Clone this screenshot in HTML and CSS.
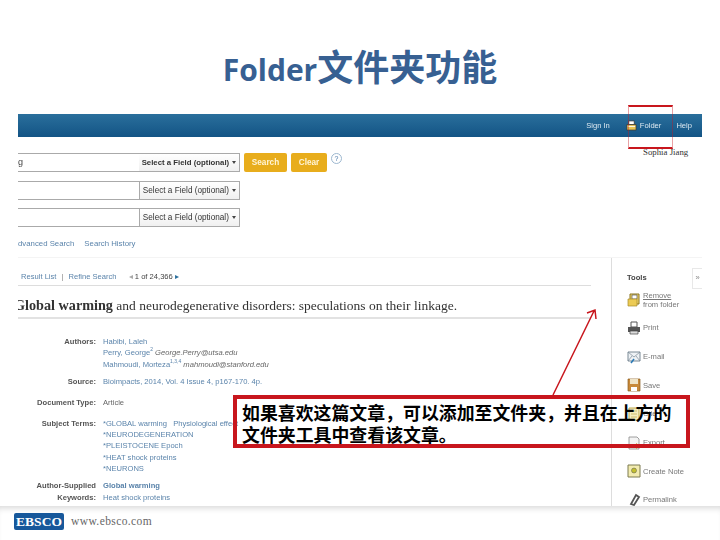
FILE: index.html
```html
<!DOCTYPE html>
<html lang="zh-CN">
<head>
<meta charset="utf-8">
<title>Folder文件夹功能</title>
<link rel="stylesheet" href="styles.css">
</head>
<body>
<div class="slide">
  <h1 class="title">Folder<span class="title-cjk">文件夹功能</span></h1>
  <div class="shot">
    <div class="bar">
      <span>Sign In</span>
      <span class="bar-folder">
        <svg class="bar-icon" viewBox="0 0 12 12"><path d="M3 1h6v4H3z" fill="#fff" stroke="#333" stroke-width=".8"/><path d="M1 5h10v6H1z" fill="#e8c452" stroke="#333" stroke-width=".8"/><path d="M2 7h8" stroke="#fff"/></svg>
        Folder
      </span>
      <span class="bar-help">Help</span>
    </div>
    <div class="search">
      <div class="search-row">
        <div class="field"><span class="field-text">g</span><span class="select select-first">Select a Field (optional) <i class="caret"></i></span></div>
        <span class="btn btn-search">Search</span>
        <span class="btn btn-clear">Clear</span>
        <span class="help">?</span>
      </div>
      <div class="search-row">
        <div class="field"><span class="field-text"></span><span class="select">Select a Field (optional) <i class="caret"></i></span></div>
      </div>
      <div class="search-row">
        <div class="field"><span class="field-text"></span><span class="select">Select a Field (optional) <i class="caret"></i></span></div>
      </div>
      <div class="search-links"><span class="clip-a">dvanced Search</span><span>Search History</span></div>
    </div>
    <div class="main">
      <div class="article">
        <div class="nav">
          <span class="link">Result List</span><span class="sep">|</span><span class="link">Refine Search</span>
          <span class="pager">◂ <b>1 of 24,366</b> <i class="next">▸</i></span>
        </div>
        <h2 class="doc-title"><b>Global warming</b> and neurodegenerative disorders: speculations on their linkage.</h2>
        <div class="meta">
          <div class="row"><div class="label">Authors:</div><div class="value">Habibi, Laleh<br>Perry, George<sup>2</sup> <i class="mail">George.Perry@utsa.edu</i><br>Mahmoudi, Morteza<sup>1,3,4</sup> <i class="mail">mahmoudi@stanford.edu</i></div></div>
          <div class="row"><div class="label">Source:</div><div class="value">Bioimpacts, 2014, Vol. 4 Issue 4, p167-170. 4p.</div></div>
          <div class="row"><div class="label">Document Type:</div><div class="value plain">Article</div></div>
          <div class="row"><div class="label">Subject Terms:</div><div class="value">*GLOBAL warming &nbsp; Physiological effect<br>*NEURODEGENERATION<br>*PLEISTOCENE Epoch<br>*HEAT shock proteins<br>*NEURONS</div></div>
          <div class="row"><div class="label">Author-Supplied<br>Keywords:</div><div class="value"><b>Global warming</b><br>Heat shock proteins<br>Neurodegeneration</div></div>
        </div>
      </div>
      <aside class="tools">
        <div class="tools-head">Tools</div>
        <div class="tool tool-remove">
          <svg class="tool-icon" viewBox="0 0 14 14"><path d="M3 1h9v10H3z" fill="#f2d873" stroke="#8a7420"/><path d="M5 2h5v4H5z" fill="#fff" stroke="#555" stroke-width=".7"/><path d="M1 6h9v7H1z" fill="#eccb55" stroke="#a88a28" stroke-width=".7"/></svg>
          <span><u>Remove</u><br>from folder</span>
        </div>
        <div class="tool">
          <svg class="tool-icon" viewBox="0 0 14 14"><path d="M4 1h6v5H4z" fill="#fff" stroke="#555"/><path d="M1 6h12v5H1z" fill="#555"/><path d="M3 10h8v3H3z" fill="#ddd" stroke="#444" stroke-width=".7"/></svg>
          <span>Print</span>
        </div>
        <div class="tool">
          <svg class="tool-icon" viewBox="0 0 14 14"><path d="M1 2h12v9H1z" fill="#eef2f5" stroke="#7b8a96"/><path d="M1 2l6 5 6-5M1 11l4-5M13 11L9 6" fill="none" stroke="#7b8a96" stroke-width=".7"/><path d="M4 13l3-4" stroke="#2a79b5" stroke-width="1.6"/></svg>
          <span>E-mail</span>
        </div>
        <div class="tool">
          <svg class="tool-icon" viewBox="0 0 14 14"><path d="M1 1h12v12H1z" fill="#c8893a" stroke="#8a5c20" stroke-width=".7"/><path d="M3 1h8v5H3z" fill="#efe3c6"/><path d="M4 9h6v4H4z" fill="#fff"/></svg>
          <span>Save</span>
        </div>
        <div class="tool">
          <svg class="tool-icon" viewBox="0 0 14 14"><path d="M2 1h10v12H2z" fill="#f5edc0" stroke="#bda94a"/><path d="M4 4h6M4 7h6M4 10h6" stroke="#bda94a" stroke-width=".7"/></svg>
          <span>Cite</span>
        </div>
        <div class="tool">
          <svg class="tool-icon" viewBox="0 0 14 14"><path d="M2 1h8l2 2v10H2z" fill="#f4f4f4" stroke="#888" stroke-width=".8"/><path d="M5 9h4V7l4 3-4 3v-2H5z" fill="#c9a227"/></svg>
          <span>Export</span>
        </div>
        <div class="tool">
          <svg class="tool-icon" viewBox="0 0 14 14"><path d="M1 1h12v12H1z" fill="#f3ecb0" stroke="#7d7a50"/><circle cx="7" cy="6.500" r="2.500" fill="#c3bf2e" stroke="#555" stroke-width=".5"/></svg>
          <span>Create Note</span>
        </div>
        <div class="tool">
          <svg class="tool-icon" viewBox="0 0 14 14"><path d="M9 2l3 2-5 8-3-1z" fill="none" stroke="#555" stroke-width="1.800"/></svg>
          <span>Permalink</span>
        </div>
        <span class="collapse">»</span>
      </aside>
    </div>
  </div>
  <footer class="footer">
    <span class="logo">EBSCO</span>
    <span class="url">www.ebsco.com</span>
  </footer>

  <div class="folder-mark"></div>
  <div class="user-name">Sophia Jiang</div>
  <svg class="arrow" viewBox="0 0 720 540"><path d="M553 395L594 311M587 313l8-3 1 9" fill="none" stroke="#c8161d" stroke-width="1.500"/></svg>
  <div class="callout">如果喜欢这篇文章，可以添加至文件夹，并且在上方的<br>文件夹工具中查看该文章。</div>
</div>
</body>
</html>
```
FILE: styles.css
```css
* { box-sizing: border-box; }
html, body { margin: 0; padding: 0; background: #fff; }
.slide {
  position: relative;
  width: 720px;
  height: 540px;
  overflow: hidden;
  display: flex;
  flex-direction: column;
  font-family: "Liberation Sans", Arial, sans-serif;
}
.title {
  height: 114px;
  flex: none;
  margin: 0;
  padding-top: 43px;
  text-align: center;
  font: 700 30px/44px "Open Sans", "Noto Sans CJK SC", sans-serif;
  color: #376092;
  white-space: nowrap;
}
.title-cjk { font: 700 36px/44px "Noto Sans CJK SC", sans-serif; }

.shot {
  flex: none;
  width: 684px;
  height: 392px;
  margin-left: 18px;
  overflow: hidden;
  background: #fff;
  display: flex;
  flex-direction: column;
  font-size: 7.600px;
  color: #555;
  filter: blur(.4px);
}
.bar {
  flex: none;
  height: 23px;
  display: flex;
  justify-content: flex-end;
  align-items: center;
  padding-right: 10px;
  background: linear-gradient(#2a6f9c, #135485);
  color: #dce8f0;
  font-size: 7.600px;
}
.bar-folder { display: flex; align-items: center; gap: 3px; margin: 0 15px 0 16px; }
.bar-icon { width: 11px; height: 11px; }

.search { flex: none; height: 121px; padding-top: 16px; display: flex; flex-direction: column; gap: 8.500px; border-bottom: 1px solid #f4f4f4; }
.search-row { display: flex; align-items: flex-start; height: 19px; }
.field { width: 222px; height: 19px; display: flex; border: solid #aaa; border-width: 1px 0; }
.field-text { flex: 1; font-size: 9px; line-height: 17px; color: #444; }
.select {
  width: 101px;
  flex: none;
  border-left: 1px solid #aaa;
  border-right: 1px solid #aaa;
  background: linear-gradient(#fff, #f0f0f0);
  color: #333;
  font-size: 8.200px;
  line-height: 17px;
  text-align: center;
  white-space: nowrap;
}
.select-first { border-left: 0; font-weight: 700; font-size: 7.800px; }
.caret { display: inline-block; border: 2.500px solid transparent; border-top: 3px solid #444; border-bottom: 0; vertical-align: middle; margin-left: 1px; }
.btn {
  height: 19px;
  margin-left: 4px;
  border-radius: 2px;
  background: #e8ad1c;
  color: #fff5d8;
  font-size: 8.200px;
  font-weight: 700;
  line-height: 19px;
  text-align: center;
}
.btn-search { width: 43px; }
.btn-clear { width: 36px; }
.help {
  width: 11px;
  height: 11px;
  margin: 0 0 0 4px;
  border: 1px solid #9db8d0;
  border-radius: 50%;
  color: #4a78a8;
  font-size: 7px;
  line-height: 9px;
  text-align: center;
}
.search-links { display: flex; gap: 10px; margin-top: 2px; color: #5b84ab; font-size: 7.800px; line-height: 12px; }

.main { flex: 1; min-height: 0; display: flex; }
.article { width: 593px; flex: none; padding-right: 20px; }
.nav { padding: 13px 0 0 3px; height: 28px; border-bottom: 1px solid #ddd; line-height: 12px; color: #5b84ab; white-space: nowrap; }
.link { color: #5b84ab; }
.sep { margin: 0 5px; color: #888; }
.pager { margin-left: 10px; color: #aaa; }
.pager b { color: #444; font-weight: 400; }
.next { font-style: normal; color: #2a6f9c; }
.doc-title {
  margin: 0 0 0 -4px;
  padding: 12px 0 4px;
  border-bottom: 2px solid #e2e2e2;
  font: 400 13.500px/14px "Liberation Serif", "Times New Roman", serif;
  color: #333;
  white-space: nowrap;
}
.doc-title b { font-weight: 700; font-size: 14.200px; }
.meta { padding-top: 17px; }
.row { display: flex; gap: 7px; min-height: 15px; margin-bottom: 6px; line-height: 11.300px; }
.label { width: 78px; flex: none; text-align: right; font-weight: 700; color: #555; }
.value { color: #5b84ab; white-space: nowrap; }
.value.plain { color: #666; }
.value sup { font-size: 5px; line-height: 0; }
.mail { color: #666; }

.tools { position: relative; flex: 1; padding: 14px 0 0 15px; border-left: 1px solid #ddd; }
.tools-head { font-weight: 700; color: #444; line-height: 12px; height: 15px; }
.tool { display: flex; align-items: center; gap: 2px; height: 28.700px; line-height: 9px; color: #777; }
.tool-remove { height: 26.500px; }
.tool-icon { width: 14px; height: 14px; flex: none; }
.collapse {
  position: absolute;
  top: 10px;
  right: 0;
  width: 10px;
  height: 21px;
  border: 1px solid #e8e8e8;
  border-right: 0;
  color: #888;
  text-align: center;
  line-height: 18px;
}

.footer { flex: 1; display: flex; align-items: flex-start; gap: 7px; padding: 7px 0 0 14px; box-shadow: inset 0 6px 6px -4px rgba(0,0,0,.16); background: #fff; }
.logo {
  width: 50px;
  height: 17px;
  border-radius: 2px;
  background: #17589b;
  color: #fff;
  font: 700 13.500px/17px "Liberation Serif", serif;
  text-align: center;
}
.url { font: 400 11.500px/17px "Liberation Serif", serif; letter-spacing: .4px; color: #666; }

.folder-mark {
  position: absolute;
  left: 628px;
  top: 105px;
  width: 45px;
  height: 44px;
  border: solid #c8161d;
  border-width: 2px 1px;
  border-left-color: rgba(200,22,29,.4);
  border-right-color: rgba(200,22,29,.4);
}
.user-name { position: absolute; left: 643px; top: 147px; font: 400 8.800px/11px "Liberation Serif", serif; color: #333; white-space: nowrap; }
.arrow { position: absolute; inset: 0; width: 720px; height: 540px; pointer-events: none; }
.callout {
  position: absolute;
  left: 233px;
  top: 395px;
  width: 457px;
  height: 53px;
  padding: 2px 0 0 5px;
  border: 4px solid #c8161d;
  font: 700 17.900px/22px "Noto Sans CJK SC", sans-serif;
  color: #000;
  white-space: nowrap;
}
```
